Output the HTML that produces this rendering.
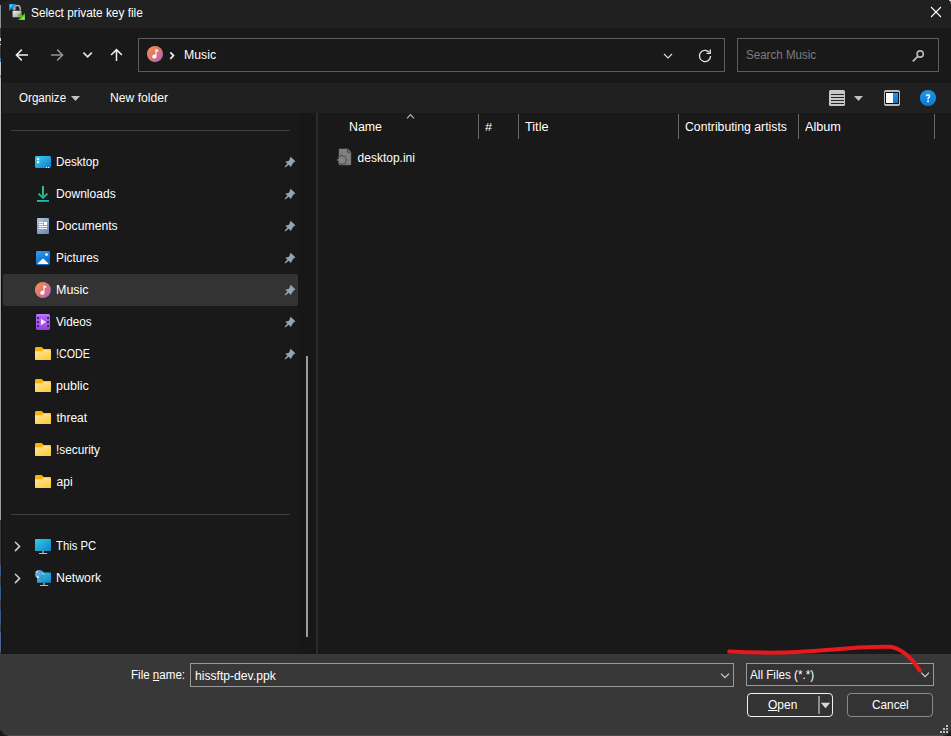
<!DOCTYPE html>
<html><head><meta charset="utf-8"><title>Select private key file</title>
<style>
html,body{margin:0;padding:0}
body{width:951px;height:736px;background:#191919;overflow:hidden;position:relative;font-family:"Liberation Sans",sans-serif;font-size:12px;color:#fff}
.a{position:absolute}
.t{position:absolute;white-space:nowrap;line-height:14px;height:14px;transform-origin:0 0}
u{text-decoration:underline;text-underline-offset:1px}
svg{position:absolute;left:0;top:0}
</style></head><body>
<!-- window chrome -->
<div class="a" style="left:1px;top:0;width:950px;height:28px;background:#202020;border-radius:7px 7px 0 0"></div>
<div class="a" style="left:1px;top:83px;width:950px;height:30px;background:#202020"></div>
<div class="a" style="left:1px;top:654px;width:950px;height:82px;background:#383838;border-radius:0 0 8px 8px"></div>
<div class="a" style="left:8px;top:735px;width:935px;height:1px;background:#4c4c4c"></div>
<!-- left edge strip -->
<div class="a" style="left:0;top:0;width:1px;height:736px;background:linear-gradient(#1e1e1e 0px,#1e1e1e 5px,#8a929c 5px,#8a929c 28px,#3c3c3c 28px,#3c3c3c 38px,#e0e0e0 38px,#e0e0e0 41px,#7a3a3a 41px,#7a3a3a 44px,#e0e0e0 44px,#e0e0e0 45px,#3c3c3c 45px,#3c3c3c 58px,#3a78c0 58px,#3a78c0 62px,#c6c6c6 62px,#c6c6c6 75px,#8a8a8a 75px,#8a8a8a 78px,#bcbcbc 78px,#bcbcbc 200px,#a0a0a0 200px,#a0a0a0 520px,#3c3c3c 520px,#3c3c3c 565px,#3a5a90 565px,#3a5a90 576px,#444 576px,#444 586px,#3a5a90 586px,#3a5a90 600px,#444 600px,#444 610px,#3a5a90 610px,#3a5a90 625px,#444 625px,#444 632px,#4a6a98 632px,#4a6a98 652px,#3a3a3a 652px,#3a3a3a 731px,#1c1414 731px,#1c1414 736px)"></div>
<div class="a" style="left:1px;top:28px;width:1px;height:626px;background:#121212"></div>
<div class="a" style="left:949px;top:0;width:2px;height:1px;background:#c4d0d4"></div><div class="a" style="left:950px;top:1px;width:1px;height:1px;background:#4a86c8"></div><div class="a" style="left:950px;top:2px;width:1px;height:1px;background:#6a3434"></div><div class="a" style="left:950px;top:3px;width:1px;height:1px;background:#585858"></div>
<!-- address + search boxes -->
<div class="a" style="left:138px;top:38px;width:585px;height:32px;border:1px solid #5c5c5c"></div>
<div class="a" style="left:737px;top:38px;width:200px;height:32px;border:1px solid #5c5c5c"></div>
<!-- nav pane -->
<div class="a" style="left:11px;top:130px;width:279px;height:1px;background:#3f3f3f"></div>
<div class="a" style="left:11px;top:514px;width:279px;height:1px;background:#3f3f3f"></div>
<div class="a" style="left:3px;top:274px;width:295px;height:32px;background:#333333;border-radius:2px"></div>
<div class="a" style="left:298px;top:113px;width:18px;height:541px;background:#171717"></div>
<div class="a" style="left:306px;top:356px;width:2px;height:281px;background:#9b9b9b"></div>
<div class="a" style="left:316px;top:113px;width:2px;height:541px;background:#2b2b2b"></div>
<!-- column header separators -->
<div class="a" style="left:478px;top:114px;width:1px;height:25px;background:#686868"></div>
<div class="a" style="left:518px;top:114px;width:1px;height:25px;background:#686868"></div>
<div class="a" style="left:678px;top:114px;width:1px;height:25px;background:#686868"></div>
<div class="a" style="left:798px;top:114px;width:1px;height:25px;background:#686868"></div>
<div class="a" style="left:934px;top:114px;width:1px;height:25px;background:#686868"></div>
<!-- bottom controls -->
<div class="a" style="left:190px;top:663px;width:542px;height:22px;border:1px solid #9a9a9a;background:#383838"></div>
<div class="a" style="left:746px;top:663px;width:186px;height:21px;border:1px solid #9a9a9a;background:#333333"></div>
<div class="a" style="left:747px;top:693px;width:84px;height:22px;border:1px solid #f0f0f0;border-radius:4px;background:#333333"></div>
<div class="a" style="left:847px;top:693px;width:84px;height:22px;border:1px solid #8a8a8a;border-radius:4px;background:#333333"></div>
<svg width="951" height="736" viewBox="0 0 951 736">
<defs>
<linearGradient id="gFold" x1="0" y1="0" x2="0.7" y2="1"><stop offset="0" stop-color="#ffe89c"/><stop offset="0.6" stop-color="#ffd866"/><stop offset="1" stop-color="#fccb46"/></linearGradient>
<linearGradient id="gMus" x1="0.1" y1="0.1" x2="0.9" y2="0.9"><stop offset="0" stop-color="#f4914f"/><stop offset="0.55" stop-color="#da7379"/><stop offset="1" stop-color="#b866c0"/></linearGradient>
<linearGradient id="gDesk" x1="0" y1="0" x2="1" y2="1"><stop offset="0" stop-color="#36d0e8"/><stop offset="0.5" stop-color="#24a8dc"/><stop offset="1" stop-color="#1576c8"/></linearGradient>
<linearGradient id="gDown" gradientUnits="userSpaceOnUse" x1="43" y1="186" x2="43" y2="199"><stop offset="0" stop-color="#36ca7e"/><stop offset="0.6" stop-color="#2bbf8c"/><stop offset="1" stop-color="#1c9cb4"/></linearGradient>
<linearGradient id="gDown2" x1="0" y1="0" x2="1" y2="0"><stop offset="0" stop-color="#30c684"/><stop offset="1" stop-color="#1fb0a6"/></linearGradient>
<linearGradient id="gDoc" x1="0" y1="0" x2="0.8" y2="1"><stop offset="0" stop-color="#b2c8e2"/><stop offset="1" stop-color="#6c8cb2"/></linearGradient>
<linearGradient id="gPic" x1="0" y1="0" x2="0.5" y2="1"><stop offset="0" stop-color="#2f9ff5"/><stop offset="1" stop-color="#0f69ba"/></linearGradient>
<linearGradient id="gVid" x1="0" y1="0" x2="0" y2="1"><stop offset="0" stop-color="#b065f4"/><stop offset="0.7" stop-color="#a352ee"/><stop offset="1" stop-color="#8e3fd8"/></linearGradient>
<linearGradient id="gPC" x1="0" y1="0" x2="1" y2="1"><stop offset="0" stop-color="#2ccfe6"/><stop offset="1" stop-color="#1380c8"/></linearGradient>
<radialGradient id="gGlobe" cx="0.45" cy="0.4" r="0.65"><stop offset="0" stop-color="#68b4e6"/><stop offset="1" stop-color="#3485c4"/></radialGradient>
<linearGradient id="gHelp" x1="0" y1="0" x2="0" y2="1"><stop offset="0" stop-color="#2198ec"/><stop offset="1" stop-color="#0a78d6"/></linearGradient>
<linearGradient id="gLock" x1="0" y1="0" x2="1" y2="1"><stop offset="0" stop-color="#f4f4f4"/><stop offset="1" stop-color="#9a9a9a"/></linearGradient>
<g id="folder">
  <path d="M1.2 0 H6 Q6.8 0 7.4 0.6 L8.6 2 H14.8 Q16 2 16 3.2 V11.8 Q16 13 14.8 13 H1.2 Q0 13 0 11.8 V1.2 Q0 0 1.2 0Z" fill="#f3b30a"/>
  <path d="M0 5.2 Q0 4.2 1 4.2 H6.4 Q7 4.2 7.4 3.8 L8.2 3 Q8.6 2.6 9.2 2.6 H14.8 Q16 2.6 16 3.8 V11.8 Q16 13 14.8 13 H1.2 Q0 13 0 11.8Z" fill="url(#gFold)"/>
</g>
<g id="pin">
  <path d="M6 0 L10.8 4.4 L8.5 6.3 L6.2 10.1 L4.2 8 L0.7 10.7 L0 10 L2.8 6.6 L0.6 4.9 L4.4 3.9Z" fill="#97a3ad"/>
</g>
<g id="chev">
  <path d="M0.6 0.6 L4.8 4.8 L0.6 9" fill="none" stroke="#cecece" stroke-width="1.5" stroke-linecap="round"/>
</g>
</defs>

<!-- title icon -->
<g>
  <path d="M9 4 H16.2 L13.8 6.4 L16.4 9 L14.2 11 L11.6 8.6 L9 11Z" fill="#1c8fe8"/>
  <path d="M10 4.5 H13 L10 8Z" fill="#4fd8f8"/>
  <path d="M14.4 11 V8.6 Q14.4 5.5 17.3 5.5 Q20.2 5.5 20.2 8.6 V11" fill="none" stroke="#b0b0b0" stroke-width="1.5"/>
  <rect x="12.3" y="10.5" width="9.4" height="7" rx="0.8" fill="url(#gLock)" stroke="#2a2a2a" stroke-width="0.6"/>
  <path d="M25 20 H18 L20.3 17.7 L17.8 15.2 L20 13 L22.5 15.5 L25 13Z" fill="#56c022"/>
  <path d="M24.5 19.5 H20.8 L24.5 15.4Z" fill="#98ea58"/>
</g>
<!-- close X -->
<path d="M931 7 L941 17 M941 7 L931 17" stroke="#ffffff" stroke-width="1.1" fill="none"/>

<!-- nav arrows -->
<path d="M28 55 H16.6 M21.8 49.6 L16.4 55 L21.8 60.4" fill="none" stroke="#f0f0f0" stroke-width="1.5"/>
<path d="M51 55 H62.4 M57.2 49.6 L62.6 55 L57.2 60.4" fill="none" stroke="#929292" stroke-width="1.5"/>
<path d="M83.4 52.6 L87.6 56.8 L91.8 52.6" fill="none" stroke="#e4e4e4" stroke-width="1.7"/>
<path d="M116.5 61 V49.8 M111.1 55 L116.5 49.6 L121.9 55" fill="none" stroke="#f0f0f0" stroke-width="1.5"/>

<!-- address bar: music icon, chevron, dropdown, refresh -->
<circle cx="155" cy="54" r="8" fill="url(#gMus)"/>
<path transform="translate(-0.8,-0.5)" d="M156.2 49.6 L159 50.6 V52.4 L157.3 51.8 V57 A2.1 1.9 0 1 1 156.2 55.4Z" fill="#ffffff"/>
<path d="M170.3 52.4 L173.5 55.6 L170.3 58.8" fill="none" stroke="#f0f0f0" stroke-width="1.7"/>
<path d="M664 54 L668 58 L672 54" fill="none" stroke="#e0e0e0" stroke-width="1.1"/>
<path d="M709.3 52.4 A5.6 5.6 0 1 0 710.6 56" fill="none" stroke="#e4e4e4" stroke-width="1.3"/>
<path d="M710.3 49.6 V53.4 H706.5" fill="none" stroke="#e4e4e4" stroke-width="1.3"/>
<!-- search magnifier -->
<circle cx="920.2" cy="54" r="3.1" fill="none" stroke="#b8b8b8" stroke-width="1.6"/>
<path d="M917.8 56.4 L912.8 61.4" stroke="#b8b8b8" stroke-width="1.9" fill="none"/>

<!-- toolbar -->
<path d="M71 96 H80 L75.5 101Z" fill="#c2c2c2"/>
<rect x="829" y="90" width="16" height="16" rx="1.5" fill="#c6c6c6"/>
<path d="M831 94.5 H844 M831 97.5 H844 M831 100.5 H844 M831 103.5 H844" stroke="#262626" stroke-width="1.1"/>
<path d="M854 96 H863 L858.5 101Z" fill="#c2c2c2"/>
<rect x="884" y="90" width="16" height="16" rx="1.8" fill="#bcbcbc"/>
<rect x="885" y="92" width="14" height="12" rx="1" fill="#0c0c0c"/>
<rect x="886" y="93" width="7" height="10" fill="#ffffff"/>
<rect x="893" y="93" width="5" height="10" fill="url(#gHelp)"/>
<circle cx="928" cy="98" r="8.1" fill="url(#gHelp)"/>
<path d="M926.5 96.2 Q926.5 94.7 928 94.7 Q929.5 94.7 929.5 96.1 Q929.5 97 928.8 97.6 Q928 98.3 928 99.4" fill="none" stroke="#ffffff" stroke-width="1.45"/>
<rect x="927.2" y="100.5" width="1.7" height="1.7" fill="#ffffff"/>

<!-- header sort arrow -->
<path d="M407 118.3 L410.5 114.7 L414 118.3" fill="none" stroke="#b8b8b8" stroke-width="1.2"/>

<!-- file icon -->
<g>
  <path d="M339.2 149 H347.8 L350.8 152 V164.8 H339.2Z" fill="#808080" stroke="#8e8e8e" stroke-width="0.5"/>
  <path d="M347.6 149.2 V152.2 H350.6" fill="none" stroke="#2a2a2a" stroke-width="0.7"/>
  <path d="M346.86 159.33 L346.86 160.67 L345.28 160.90 L344.93 161.76 L345.87 163.03 L344.93 163.97 L343.66 163.03 L342.80 163.38 L342.57 164.96 L341.23 164.96 L341.00 163.38 L340.14 163.03 L338.87 163.97 L337.93 163.03 L338.87 161.76 L338.52 160.90 L336.94 160.67 L336.94 159.33 L338.52 159.10 L338.87 158.24 L337.93 156.97 L338.87 156.03 L340.14 156.97 L341.00 156.62 L341.23 155.04 L342.57 155.04 L342.80 156.62 L343.66 156.97 L344.93 156.03 L345.87 156.97 L344.93 158.24 L345.28 159.10Z" fill="#888e94" stroke="#3a3a3a" stroke-width="0.7"/>
  <circle cx="341.9" cy="160" r="1.5" fill="#9a9ea2" stroke="#565656" stroke-width="0.5"/>
</g>

<!-- nav pane icons -->
<!-- desktop -->
<g transform="translate(35,156)">
  <rect x="0" y="0" width="16" height="12" rx="1.4" fill="url(#gDesk)"/>
  <rect x="2" y="2.2" width="2.2" height="2" fill="#fff"/>
  <rect x="2" y="5.2" width="2.2" height="2" fill="#fff"/>
  <rect x="11" y="11" width="1" height="1" fill="#fff"/>
  <rect x="13" y="11" width="1" height="1" fill="#fff"/>
</g>
<!-- downloads -->
<g>
  <path d="M43 186 V197.6" stroke="url(#gDown)" stroke-width="1.9"/>
  <path d="M38.6 193.6 L43 198 L47.4 193.6" fill="none" stroke="url(#gDown)" stroke-width="1.9"/>
  <rect x="37" y="200" width="12" height="1.8" fill="url(#gDown2)"/>
</g>
<!-- documents -->
<g transform="translate(37,218)">
  <rect x="0" y="0" width="12" height="16" rx="1.2" fill="url(#gDoc)"/>
  <rect x="2" y="4" width="4" height="1" fill="#fff"/>
  <rect x="2" y="6" width="4" height="1" fill="#fff"/>
  <rect x="7" y="4" width="3" height="3" fill="#fff"/>
  <rect x="2" y="8" width="8" height="1" fill="#fff"/>
  <rect x="2" y="10" width="8" height="1" fill="#fff"/>
</g>
<!-- pictures -->
<g transform="translate(36,251)">
  <rect x="0" y="0" width="14" height="14" rx="1.4" fill="url(#gPic)"/>
  <path d="M1.6 12.6 L6.4 8 Q7.1 7.4 7.8 8 L12.4 12.6 Q12.4 13 12 13 H2 Q1.6 13 1.6 12.6Z" fill="#fff"/>
  <circle cx="10.5" cy="3.6" r="1.35" fill="#fff"/>
</g>
<!-- music -->
<circle cx="42.9" cy="290" r="8" fill="url(#gMus)"/>
<path d="M43.4 285.2 L46.2 286.2 V288 L44.5 287.4 V292.8 A2.1 1.9 0 1 1 43.4 291.2Z" fill="#ffffff"/>
<!-- videos -->
<g transform="translate(36,314)">
  <rect x="0" y="0" width="14" height="16" rx="1.4" fill="url(#gVid)"/>
  <rect x="0.6" y="0.4" width="12.8" height="1.2" rx="0.6" fill="#cf9cff" opacity="0.7"/>
  <g fill="#3c1c66">
    <rect x="1" y="3" width="2" height="2" rx="0.4"/><rect x="1" y="7" width="2" height="2" rx="0.4"/><rect x="1" y="11" width="2" height="2" rx="0.4"/>
    <rect x="11" y="3" width="2" height="2" rx="0.4"/><rect x="11" y="7" width="2" height="2" rx="0.4"/><rect x="11" y="11" width="2" height="2" rx="0.4"/>
  </g>
  <path d="M4.9 4.7 L10 8 L4.9 11.2Z" fill="#f2ece6"/>
</g>
<!-- folders -->
<use href="#folder" x="35" y="347"/>
<use href="#folder" x="35" y="379"/>
<use href="#folder" x="35" y="411"/>
<use href="#folder" x="35" y="443"/>
<use href="#folder" x="35" y="475"/>
<!-- pins -->
<use href="#pin" x="284.6" y="156.8"/>
<use href="#pin" x="284.6" y="188.8"/>
<use href="#pin" x="284.6" y="220.8"/>
<use href="#pin" x="284.6" y="252.8"/>
<use href="#pin" x="284.6" y="284.8"/>
<use href="#pin" x="284.6" y="316.8"/>
<use href="#pin" x="284.6" y="348.8"/>
<!-- this pc -->
<use href="#chev" x="14.8" y="541.6"/>
<use href="#chev" x="14.8" y="573.6"/>
<g>
  <rect x="35" y="539" width="16" height="12" rx="0.6" fill="url(#gPC)"/>
  <rect x="42.4" y="551" width="1.4" height="2.6" fill="#aab2ba"/>
  <rect x="39" y="553" width="8.2" height="1" fill="#b4bcc4"/>
</g>
<g>
  <rect x="37" y="572.6" width="14" height="10.2" rx="0.6" fill="url(#gPC)"/>
  <rect x="43.4" y="582.8" width="1.4" height="2.6" fill="#aab2ba"/>
  <rect x="40" y="585" width="8.2" height="1" fill="#b4bcc4"/>
  <circle cx="39.4" cy="574.4" r="4.5" fill="url(#gGlobe)"/>
  <path d="M35.6 572.6 Q36.4 570.8 38.4 570.3 Q38.6 571.4 37.4 572 Q36.4 572.4 36.2 573.6Z" fill="#e4f2fa" opacity="0.9"/>
  <path d="M36 575.6 Q37.6 575.4 38.6 576.6 Q39.6 577.6 39 578.6 Q36.8 578.2 36 575.6Z" fill="#e8f4fb" opacity="0.9"/>
  <path d="M42.4 571.8 Q43.8 573 43.8 575 Q42.8 575.2 42.4 574 Q42 572.8 42.4 571.8Z" fill="#dfeef8" opacity="0.85"/>
</g>

<!-- bottom: chevrons in combos -->
<path d="M721 673.7 L725 677.7 L729 673.7" fill="none" stroke="#d4d4d4" stroke-width="1.1"/>
<path d="M921.2 672.7 L925.1 676.6 L929 672.7" fill="none" stroke="#d4d4d4" stroke-width="1.1"/>
<path d="M820.8 702.8 H830.2 L825.5 708.2Z" fill="#d8d8d8"/>
<rect x="818" y="696" width="2" height="18" fill="#8e8e8e"/>
<!-- grip -->
<g fill="#bdbdbd">
  <rect x="946" y="725" width="2" height="2"/>
  <rect x="943" y="728" width="2" height="2"/><rect x="946" y="728" width="2" height="2"/>
  <rect x="940" y="731" width="2" height="2"/><rect x="943" y="731" width="2" height="2"/><rect x="946" y="731" width="2" height="2"/>
</g>
<!-- red scribble -->
<path d="M729.2 651.6 C742 652.2 760 652.8 780 652.6 C800 652.2 830 649.6 858 647.4 C870 646.9 880 646.6 888 646.7 C894 646.8 898 648.6 902 651.4 C907 655 911 658.4 914 662.4 C916.5 665.8 918.4 668.6 919.8 670.5" fill="none" stroke="#e8191c" stroke-width="4" stroke-linecap="round" stroke-linejoin="round"/>
</svg>

<div class="t" id="t0" style="left:31.22px;top:6px;color:#ffffff;transform:scaleX(0.9857);">Select private key file</div>
<div class="t" id="t1" style="left:184.04px;top:48px;color:#ffffff;transform:scaleX(1.0217);">Music</div>
<div class="t" id="t2" style="left:745.62px;top:48px;color:#7d7d7d;transform:scaleX(0.9651);">Search Music</div>
<div class="t" id="t3" style="left:19.19px;top:91px;color:#ffffff;transform:scaleX(0.9669);">Organize</div>
<div class="t" id="t4" style="left:109.81px;top:91px;color:#ffffff;transform:scaleX(1.0120);">New folder</div>
<div class="t" id="t5" style="left:348.71px;top:120px;color:#ffffff;transform:scaleX(1.0311);">Name</div>
<div class="t" id="t6" style="left:484.97px;top:120px;color:#ffffff;transform:scaleX(1.1567);font-size:11px;">#</div>
<div class="t" id="t7" style="left:525.25px;top:120px;color:#ffffff;transform:scaleX(1.0601);">Title</div>
<div class="t" id="t8" style="left:684.86px;top:120px;color:#ffffff;transform:scaleX(1.0186);">Contributing artists</div>
<div class="t" id="t9" style="left:805.20px;top:120px;color:#ffffff;transform:scaleX(1.0544);">Album</div>
<div class="t" id="t10" style="left:357.60px;top:151px;color:#ffffff;transform:scaleX(1.0000);">desktop.ini</div>
<div class="t" id="t11" style="left:55.83px;top:155px;color:#ffffff;transform:scaleX(0.9736);">Desktop</div>
<div class="t" id="t12" style="left:55.52px;top:187px;color:#ffffff;transform:scaleX(1.0051);">Downloads</div>
<div class="t" id="t13" style="left:55.71px;top:219px;color:#ffffff;transform:scaleX(1.0167);">Documents</div>
<div class="t" id="t14" style="left:56.26px;top:251px;color:#ffffff;transform:scaleX(0.9841);">Pictures</div>
<div class="t" id="t15" style="left:56.13px;top:283px;color:#ffffff;transform:scaleX(1.0394);">Music</div>
<div class="t" id="t16" style="left:55.95px;top:315px;color:#ffffff;transform:scaleX(0.9776);">Videos</div>
<div class="t" id="t17" style="left:55.56px;top:347px;color:#ffffff;transform:scaleX(0.8897);">!CODE</div>
<div class="t" id="t18" style="left:56.36px;top:379px;color:#ffffff;transform:scaleX(1.0458);">public</div>
<div class="t" id="t19" style="left:56.40px;top:411px;color:#ffffff;transform:scaleX(1.0000);">threat</div>
<div class="t" id="t20" style="left:56.09px;top:443px;color:#ffffff;transform:scaleX(0.9852);">!security</div>
<div class="t" id="t21" style="left:56.60px;top:475px;color:#ffffff;transform:scaleX(1.0000);">api</div>
<div class="t" id="t22" style="left:56.13px;top:539px;color:#ffffff;transform:scaleX(0.9381);">This PC</div>
<div class="t" id="t23" style="left:56.25px;top:571px;color:#ffffff;transform:scaleX(1.0257);">Network</div>
<div class="t" id="t24" style="left:131.04px;top:668px;color:#ffffff;transform:scaleX(0.9643);">File <u>n</u>ame:</div>
<div class="t" id="t25" style="left:194.98px;top:669px;color:#ffffff;transform:scaleX(1.0110);">hissftp-dev.ppk</div>
<div class="t" id="t26" style="left:750.10px;top:668px;color:#ffffff;transform:scaleX(0.9725);">All Files (*.*)</div>
<div class="t" id="t27" style="left:768.01px;top:698px;color:#ffffff;transform:scaleX(0.9971);"><u>O</u>pen</div>
<div class="t" id="t28" style="left:871.72px;top:698px;color:#ffffff;transform:scaleX(0.9830);">Cancel</div>
</body></html>
